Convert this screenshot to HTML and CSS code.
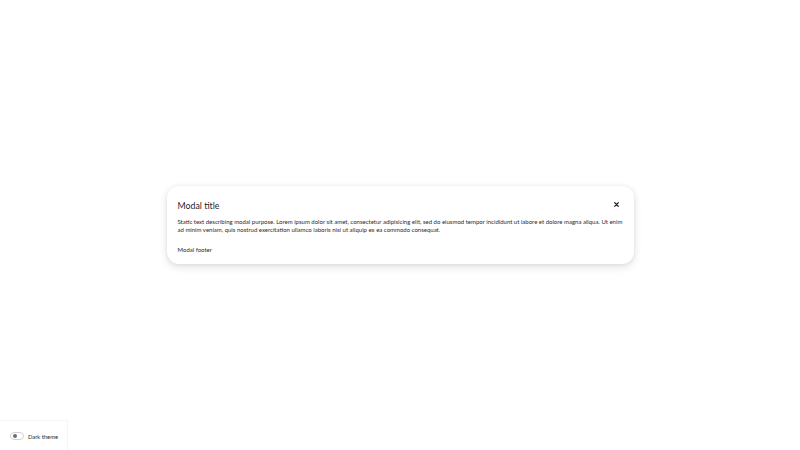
FILE: index.html
```html
<!DOCTYPE html>
<html>
<head>
<meta charset="utf-8">
<link rel="stylesheet" href="styles.css">
</head>
<body>
<div class="backdrop">
  <div class="modal">
    <div class="modal-header">
      <h1 class="modal-title">Modal title</h1>
      <button class="close" aria-label="Close">
        <svg viewBox="0 0 10 10" width="5" height="5"><path d="M1.5 1.5 L8.5 8.5 M8.5 1.5 L1.5 8.5" stroke="#151515" stroke-width="2.2" stroke-linecap="square"/></svg>
      </button>
    </div>
    <div class="modal-body">Static text describing modal purpose. Lorem ipsum dolor sit amet, consectetur adipisicing elit, sed do eiusmod tempor incididunt ut labore et dolore magna aliqua. Ut enim ad minim veniam, quis nostrud exercitation ullamco laboris nisi ut aliquip ex ea commodo consequat.</div>
    <div class="modal-footer">Modal footer</div>
  </div>
</div>
<div class="theme-toggle">
  <span class="switch"><span class="knob"></span></span>
  <span class="label">Dark theme</span>
</div>
</body>
</html>
```
FILE: styles.css
```css
html, body {
  margin: 0;
  padding: 0;
  width: 800px;
  height: 450px;
  background: #ffffff;
  font-family: Lato, "Noto Sans", "Liberation Sans", sans-serif;
  color: #151515;
  overflow: hidden;
}
.backdrop {
  width: 800px;
  height: 450px;
  display: flex;
  align-items: center;
  justify-content: center;
}
.modal {
  width: 467px;
  box-sizing: border-box;
  padding: 14px 11px 10px 11px;
  background: #fff;
  border-radius: 12px;
  box-shadow: 0 3px 8px rgba(3, 3, 3, 0.12), 0 0 4px rgba(3, 3, 3, 0.06);
}
.modal-header {
  display: flex;
  align-items: center;
  justify-content: space-between;
}
.modal-title {
  margin: 0;
  font-size: 8.8px;
  line-height: 12px;
  font-weight: 400;
  color: #1f1f1f;
}
.close {
  border: 0;
  background: none;
  padding: 0;
  margin: -2px 3.5px 0 0;
  width: 5px;
  height: 5px;
  display: flex;
}
.modal-body {
  margin-top: 6px;
  font-size: 6px;
  line-height: 8.5px;
  color: #2a2a2a;
}
.modal-footer {
  margin-top: 11px;
  font-size: 6px;
  line-height: 8.5px;
  color: #2a2a2a;
}
.theme-toggle {
  position: absolute;
  left: 0;
  bottom: 0;
  width: 68px;
  height: 30px;
  box-sizing: border-box;
  border-top: 1px solid #f5f5f5;
  border-right: 1px solid #f5f5f5;
  display: flex;
  align-items: center;
  gap: 4px;
  padding-left: 10px;
  padding-top: 1px;
}
.switch {
  width: 14px;
  height: 8px;
  border: 1px solid #d2d2d2;
  border-radius: 5px;
  box-sizing: border-box;
  display: flex;
  align-items: center;
  padding-left: 1.5px;
  background: #fff;
}
.knob {
  width: 4.5px;
  height: 4.5px;
  border-radius: 50%;
  background: #6a6e73;
}
.label {
  font-size: 5.8px;
  color: #2a2a2a;
}
```
